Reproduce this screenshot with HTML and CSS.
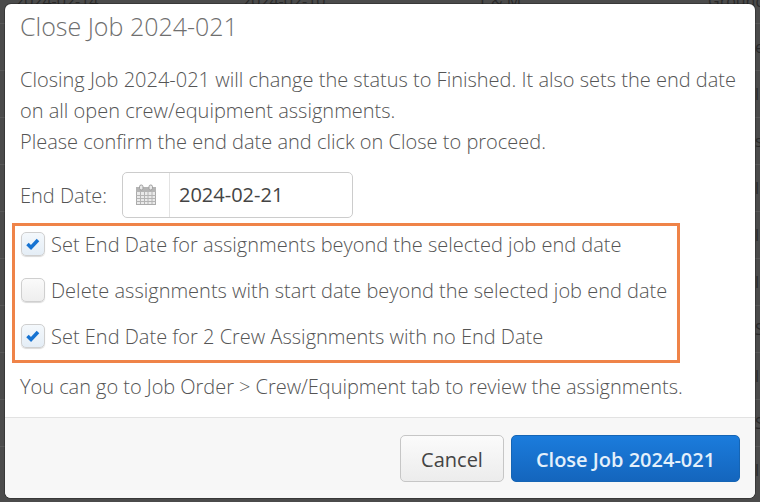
FILE: index.html
```html
<!DOCTYPE html>
<html lang="en">
<head>
<meta charset="utf-8">
<title>Close Job 2024-021</title>
<link rel="stylesheet" href="styles.css">
</head>
<body>
<div class="page">
  <div class="behind">
    <span class="cell cell-a">2024-02-14</span>
    <span class="cell cell-b">2024-02-10</span>
    <span class="cell cell-c">T &amp; M</span>
    <span class="cell cell-d">Ground</span>
    <div class="rows">
      <div class="row">e</div>
      <div class="row">l</div>
      <div class="row">s</div>
      <div class="row">l</div>
      <div class="row">l</div>
      <div class="row">l</div>
      <div class="row">S</div>
      <div class="row">l</div>
      <div class="row">S</div>
      <div class="row">l</div>
    </div>
  </div>
  <div class="modal">
    <header class="modal-header"><h1>Close Job 2024-021</h1></header>
    <div class="modal-body">
      <p class="intro">Closing Job 2024-021 will change the status to Finished. It also sets the end date on all open crew/equipment assignments.<br>Please confirm the end date and click on Close to proceed.</p>
      <div class="date-row">
        <label class="date-label">End Date:</label>
        <div class="date-input">
          <span class="date-addon">
            <svg width="22" height="22" viewBox="0 0 22 22" aria-hidden="true">
              <rect class="cal-body" x="1.500" y="3.500" width="19" height="17"/>
              <path class="cal-head" d="M1 3h20v5H1z"/>
              <path class="cal-grid" d="M1.500 11.500h19M1.500 14.500h19M1.500 17.500h19M5.500 8v12M9.500 8v12M13 8v12M17 8v12"/>
              <rect class="cal-ring" x="4.500" y="1" width="3.500" height="5" rx="1.700"/>
              <rect class="cal-ring" x="14" y="1" width="3.500" height="5" rx="1.700"/>
            </svg>
          </span>
          <span class="date-value">2024-02-21</span>
        </div>
      </div>
      <div class="options">
        <div class="option">
          <span class="check is-checked"><svg width="16" height="14" viewBox="0 0 16 14" aria-hidden="true"><path d="M2.500 7l3.500 3.500 7-7.500" /></svg></span>
          <span>Set End Date for assignments beyond the selected job end date</span>
        </div>
        <div class="option">
          <span class="check"></span>
          <span>Delete assignments with start date beyond the selected job end date</span>
        </div>
        <div class="option">
          <span class="check is-checked"><svg width="16" height="14" viewBox="0 0 16 14" aria-hidden="true"><path d="M2.500 7l3.500 3.500 7-7.500" /></svg></span>
          <span>Set End Date for 2 Crew Assignments with no End Date</span>
        </div>
      </div>
      <p class="note">You can go to Job Order &gt; Crew/Equipment tab to review the assignments.</p>
    </div>
    <footer class="modal-footer">
      <button class="btn btn-cancel" type="button">Cancel</button>
      <button class="btn btn-primary" type="button">Close Job 2024-021</button>
    </footer>
  </div>
</div>
</body>
</html>
```
FILE: styles.css
```css
* { box-sizing: border-box; }
html, body { margin: 0; padding: 0; }
body { font-family: "Open Sans", "Liberation Sans", sans-serif; }
.page {
  position: relative;
  width: 760px;
  height: 502px;
  overflow: hidden;
  background: #4b4b4b;
}
.behind { color: #2a2a2a; font-size: 16px; }
.cell { position: absolute; top: -10px; white-space: nowrap; }
.cell-a { left: 15px; }
.cell-b { left: 242px; }
.cell-c { left: 478px; }
.cell-d { left: 708px; }
.rows { padding-top: 23px; }
.row {
  height: 47px;
  line-height: 46px;
  padding-left: 755px;
  border-top: 1px solid #585858;
  white-space: nowrap;
}
.modal {
  position: absolute;
  left: 5px;
  top: 4px;
  width: 750px;
  height: 494px;
  display: flex;
  flex-direction: column;
  background: #fff;
  border-radius: 6px;
  overflow: hidden;
  box-shadow: 0 0 0 1px rgba(0, 0, 0, .25);
}
.modal-header { padding: 5px 15px 0; height: 52px; }
.modal-header h1 {
  margin: 0;
  font-size: 25px;
  line-height: 34px;
  font-weight: 300;
  color: #6f6f6f;
}
.modal-body { flex: 1; padding: 8px 15px 0 7px; color: #555; font-size: 20px; font-weight: 300; }
.intro { margin: 0 0 0 8px; line-height: 31px; color: #555; }
.date-row { display: flex; align-items: center; margin: 15px 0 0 8px; }
.date-label { width: 102px; }
.date-input {
  display: flex;
  align-items: stretch;
  width: 231px;
  height: 46px;
  border: 1px solid #ccc;
  border-radius: 5px;
}
.date-addon {
  width: 47px;
  display: flex;
  align-items: center;
  justify-content: center;
  border-right: 1px solid #e3e3e3;
}
.cal-body { fill: #eaeaea; stroke: #ababab; stroke-width: 1; }
.cal-head { fill: #b4b4b4; }
.cal-grid { stroke: #b4b4b4; stroke-width: 1; fill: none; }
.cal-ring { fill: #e8e8e8; stroke: #9f9f9f; stroke-width: 1; }
.date-value { padding-left: 9px; line-height: 44px; font-weight: 400; color: #444; }
.options {
  margin-top: 5px;
  width: 668px;
  height: 140px;
  border: 3px solid #ef8348;
  padding: 0 0 6px 6px;
  display: flex;
  flex-direction: column;
  justify-content: center;
  gap: 16px;
}
.option { display: flex; align-items: center; gap: 6px; height: 30px; }
.check {
  width: 24px;
  height: 24px;
  flex: none;
  display: flex;
  align-items: center;
  justify-content: center;
  border: 1px solid #cfcfcf;
  border-radius: 5px;
  background: linear-gradient(#fafafa, #eee);
  box-shadow: 0 1px 1px rgba(0,0,0,.15);
}
.check.is-checked { background: linear-gradient(#f4f8fc, #e4edf6); }
.check path { fill: none; stroke: #1673d2; stroke-width: 3.500; }
.note { margin: 8px 0 0 8px; line-height: 31px; letter-spacing: -.04px; }
.modal-footer {
  height: 81px;
  display: flex;
  justify-content: flex-end;
  align-items: flex-start;
  gap: 7px;
  padding: 17px 15px 0 0;
  background: #f7f7f7;
  border-top: 1px solid #e2e2e2;
}
.btn {
  height: 47px;
  font-family: inherit;
  font-size: 20px;
  border-radius: 5px;
  padding: 2px 0 0;
}
.btn-cancel {
  width: 104px;
  color: #444;
  border: 1px solid #c6c6c6;
  background: linear-gradient(#fbfbfb, #ececec);
}
.btn-primary {
  width: 229px;
  color: #e4f0fb;
  font-weight: 600;
  border: 1px solid #1565b5;
  background: linear-gradient(#1b7cdc, #1465bd);
}
```
